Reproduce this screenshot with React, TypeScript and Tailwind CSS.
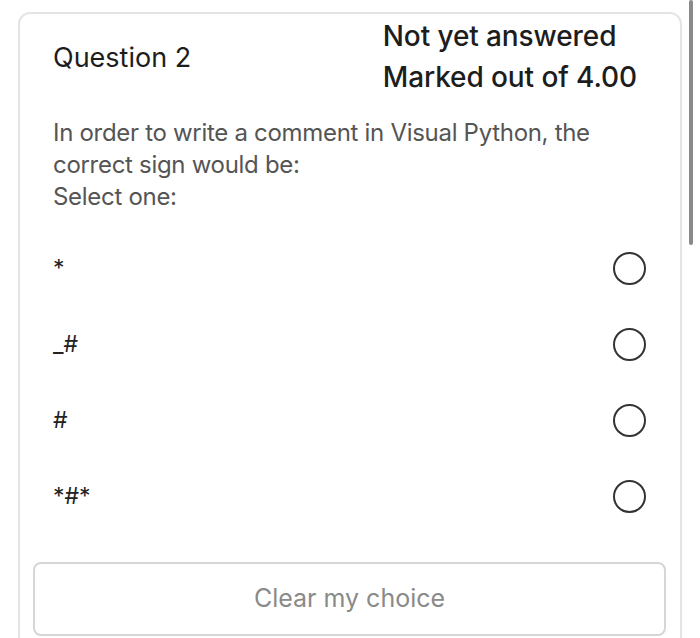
import React, { useState } from 'react';

const options = ['*', '_#', '#', '*#*'];

const App: React.FC = () => {
  const [selected, setSelected] = useState<number | null>(null);

  return (
    <div
      className="relative h-[638px] w-[700px] overflow-hidden bg-white"
      style={{ fontFamily: 'Inter, "Liberation Sans", sans-serif' }}
    >
      {/* page scrollbar */}
      <div className="absolute right-[7px] top-0 h-[245px] w-[4px] rounded-full bg-[#8a8a8a]" />

      <div className="ml-[18px] mt-[12px] h-[700px] w-[664px] rounded-[12px] border-2 border-[#e4e4e4]">
        <div className="flex items-start justify-between pl-[33px] pr-[43px] pt-[2px]">
          <h3 className="mt-[22px] text-[27px] font-normal leading-[40px] text-[#1d1d1d]">Question 2</h3>
          <div className="text-[28px] font-medium leading-[41px] tracking-[-0.1px] text-[#1d1d1d]">
            <div>Not yet answered</div>
            <div>Marked out of 4.00</div>
          </div>
        </div>

        <div className="mt-[19px] pl-[33px] pr-[60px] text-[24px] leading-[32px] tracking-[-0.3px] text-[#555]">
          <p>In order to write a comment in Visual Python, the correct sign would be:</p>
          <p>Select one:</p>
        </div>

        <div className="mt-[17px] flex flex-col">
          {options.map((opt, i) => (
            <label
              key={opt}
              className="flex h-[76px] cursor-pointer items-center justify-between pl-[33px] pr-[34px]"
              onClick={() => setSelected(i)}
            >
              <span className="text-[23px] text-[#222]">{opt}</span>
              <span className="flex h-[33px] w-[33px] items-center justify-center rounded-full border-2 border-[#333]">
                {selected === i && <span className="h-[17px] w-[17px] rounded-full bg-[#333]" />}
              </span>
            </label>
          ))}
        </div>

        <button
          className="ml-[13px] mt-[28px] h-[74px] w-[633px] rounded-[8px] border-2 border-[#d6d6d6] text-[25px] text-[#8a8a8a]"
          onClick={() => setSelected(null)}
        >
          Clear my choice
        </button>
      </div>
    </div>
  );
};

export default App;
